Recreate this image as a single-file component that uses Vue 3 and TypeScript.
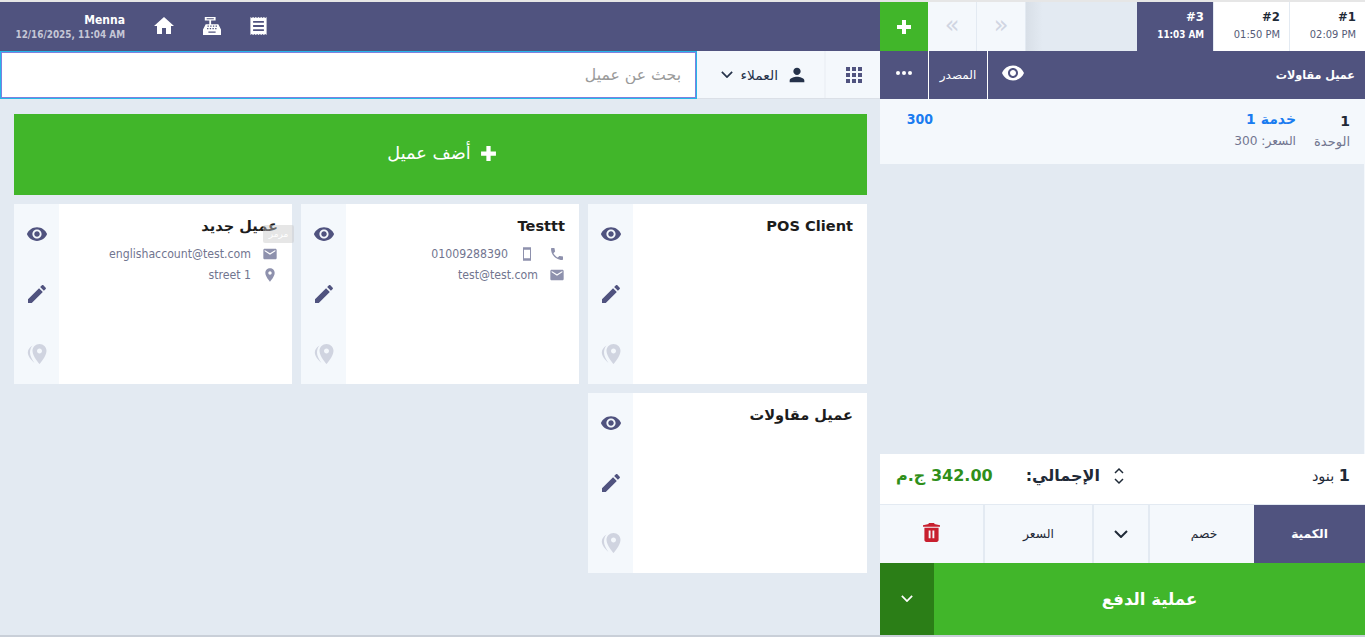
<template>
  <div class="pos" dir="rtl">
    <aside class="order">
      <div class="tabs">
        <div v-for="t in tabs" :key="t.id" class="tab" :class="{ active: t.active }">
          <b dir="ltr">#{{ t.id }}</b>
          <span dir="ltr">{{ t.time }}</span>
        </div>
        <div class="tab-gap"></div>
        <button class="nav-btn" dir="ltr">»</button>
        <button class="nav-btn" dir="ltr">«</button>
        <button class="add-tab">
          <svg viewBox="0 0 16 16" width="16" height="16"><path d="M6 1h4v5h5v4h-5v5H6v-5H1V6h5z" /></svg>
        </button>
      </div>

      <div class="customer-bar">
        <span class="customer-name">عميل مقاولات</span>
        <svg class="bar-eye" viewBox="0 0 24 24" width="24" height="24"><path :d="icons.eye" /></svg>
        <span class="bar-cell source">المصدر</span>
        <span class="bar-cell dots"><i></i><i></i><i></i></span>
      </div>

      <div class="line">
        <div class="line-qty">
          <b>1</b>
          <span>الوحدة</span>
        </div>
        <div class="line-info">
          <b>خدمة 1</b>
          <span>السعر: 300</span>
        </div>
        <b class="line-total">300</b>
      </div>

      <div class="order-fill"></div>

      <div class="summary">
        <div class="count"><b>1</b> بنود</div>
        <div class="totals">
          <svg viewBox="0 0 12 20" width="12" height="20" class="updown">
            <path d="M2 7l4-4 4 4M2 13l4 4 4-4" />
          </svg>
          <span class="total-label">الإجمالي:</span>
          <b class="total-value">342.00 ج.م</b>
        </div>
      </div>

      <div class="actions">
        <button class="act qty">الكمية</button>
        <button class="act discount">خصم</button>
        <button class="act chev">
          <svg viewBox="0 0 14 8" width="14" height="8"><path d="M1 1l6 6 6-6" /></svg>
        </button>
        <button class="act price">السعر</button>
        <button class="act trash">
          <svg viewBox="0 0 18 20" width="17" height="19">
            <path fill-rule="evenodd" d="M0 2.200L6 1V0h6v1l6 1.200V4H0zM1.500 5h15v13c0 1.100-.9 2-2 2h-11c-1.100 0-2-.9-2-2zM6 8v8h2V8zm4 0v8h2V8z" />
          </svg>
        </button>
      </div>

      <div class="pay">
        <button class="pay-main">عملية الدفع</button>
        <button class="pay-more">
          <svg viewBox="0 0 14 8" width="12" height="7"><path d="M1 1l6 6 6-6" /></svg>
        </button>
      </div>
    </aside>

    <main class="main">
      <header class="topbar" dir="ltr">
        <div class="user">
          <b>Menna</b>
          <span>12/16/2025, 11:04 AM</span>
        </div>
        <svg class="top-icon home" viewBox="0 0 24 24" width="24" height="24"><path :d="icons.home" /></svg>
        <svg class="top-icon register" viewBox="0 0 20 20" width="18" height="18">
          <path
            fill-rule="evenodd"
            d="M2 0h12v4H9v4H7V4H2zM4 1.500v1h8v-1zM3 8h14l3 6v6H0v-6zM5 9.500v1.300h1.500V9.500zm3 0v1.300h1.500V9.500zm3 0v1.300h1.500V9.500zm3 0v1.300h1.500V9.500zM4.500 12.300v1.300H6v-1.300zm3 0v1.300H9v-1.300zm3 0v1.300H12v-1.300zm3 0v1.300H15v-1.300zM6 16v1.500h8V16z"
          />
        </svg>
        <svg class="top-icon receipt" viewBox="0 0 18 20" width="17" height="18">
          <path
            fill-rule="evenodd"
            d="M0 0l1.500 1L3 0l1.500 1L6 0l1.500 1L9 0l1.500 1L12 0l1.500 1L15 0l1.500 1L18 0v20l-1.500-1-1.500 1-1.500-1-1.500 1-1.500-1L9 20l-1.500-1L6 20l-1.500-1L3 20l-1.500-1L0 20zM3 4.500v2h12v-2zM3 9v2h12V9zM3 13.500v2h12v-2z"
          />
        </svg>
      </header>

      <div class="search-row">
        <button class="grid-btn">
          <svg viewBox="0 0 24 24" width="24" height="24"><path :d="icons.apps" /></svg>
        </button>
        <button class="clients-btn">
          <svg viewBox="0 0 24 24" width="22" height="22"><path :d="icons.person" /></svg>
          <span>العملاء</span>
          <svg viewBox="0 0 14 8" width="12" height="7"><path d="M1 1l6 6 6-6" /></svg>
        </button>
        <input class="search" type="text" placeholder="بحث عن عميل" />
      </div>

      <div class="content">
        <button class="add-client">
          <svg viewBox="0 0 16 16" width="17" height="17"><path d="M6 1h4v5h5v4h-5v5H6v-5H1V6h5z" /></svg>
          أضف عميل
        </button>

        <div class="cards">
          <article v-for="c in clients" :key="c.name" class="card">
            <div class="card-body">
              <h3>{{ c.name }}</h3>
              <div v-for="(row, i) in c.rows" :key="i" class="info">
                <svg viewBox="0 0 24 24" width="16" height="16"><path :d="icons[row.icon]" /></svg>
                <svg v-if="row.icon2" class="mobile" viewBox="0 0 24 24" width="16" height="16">
                  <path fill-rule="evenodd" :d="icons[row.icon2]" />
                </svg>
                <span dir="ltr">{{ row.text }}</span>
              </div>
              <span v-if="c.tip" class="tip">مرمر</span>
            </div>
            <div class="card-side">
              <svg viewBox="0 0 24 24" width="22" height="22"><path :d="icons.eye" /></svg>
              <svg viewBox="0 0 24 24" width="24" height="24"><path :d="icons.edit" /></svg>
              <svg class="pin" viewBox="0 0 24 24" width="24" height="24">
                <path transform="translate(2.500 0)" :d="icons.place" />
                <path d="M7.500 3.500C4.500 5 2.800 8 2.800 10.500c0 3.500 3.200 7.500 6.700 10.500C6.800 17.500 5 13.500 5 10.500 5 8 5.800 5.500 7.500 3.500z" />
              </svg>
            </div>
          </article>
        </div>
      </div>
    </main>
  </div>
</template>

<script setup lang="ts">
const icons: Record<string, string> = {
  eye: 'M12 4.500C7 4.500 2.730 7.610 1 12c1.730 4.390 6 7.500 11 7.500s9.270-3.110 11-7.500c-1.730-4.390-6-7.500-11-7.500zM12 17c-2.760 0-5-2.240-5-5s2.240-5 5-5 5 2.240 5 5-2.240 5-5 5zm0-8c-1.660 0-3 1.340-3 3s1.340 3 3 3 3-1.340 3-3-1.340-3-3-3z',
  edit: 'M3 17.250V21h3.750L17.810 9.940l-3.750-3.750L3 17.250zM20.710 7.040c.39-.39.39-1.020 0-1.410l-2.340-2.340c-.39-.39-1.020-.39-1.410 0l-1.830 1.830 3.750 3.750 1.830-1.830z',
  home: 'M10 20v-6h4v6h5v-8h3L12 3 2 12h3v8z',
  person: 'M12 12c2.210 0 4-1.790 4-4s-1.790-4-4-4-4 1.790-4 4 1.790 4 4 4zm0 2c-2.670 0-8 1.340-8 4v2h16v-2c0-2.660-5.330-4-8-4z',
  apps: 'M4 8h4V4H4v4zm6 12h4v-4h-4v4zm-6 0h4v-4H4v4zm0-6h4v-4H4v4zm6 0h4v-4h-4v4zm6-10v4h4V4h-4zm-6 4h4V4h-4v4zm6 6h4v-4h-4v4zm0 6h4v-4h-4v4z',
  email: 'M20 4H4c-1.100 0-2 .9-2 2v12c0 1.100.9 2 2 2h16c1.100 0 2-.9 2-2V6c0-1.100-.9-2-2-2zm0 4l-8 5-8-5V6l8 5 8-5v2z',
  place: 'M12 2C8.130 2 5 5.130 5 9c0 5.250 7 13 7 13s7-7.750 7-13c0-3.870-3.130-7-7-7zm0 9.500c-1.380 0-2.500-1.120-2.500-2.500s1.120-2.500 2.500-2.500 2.500 1.120 2.500 2.500-1.120 2.500-2.500 2.500z',
  phone: 'M6.620 10.790c1.440 2.830 3.760 5.140 6.590 6.590l2.200-2.200c.27-.27.67-.36 1.020-.24 1.120.37 2.330.57 3.570.57.55 0 1 .45 1 1V20c0 .55-.45 1-1 1-9.390 0-17-7.610-17-17 0-.55.45-1 1-1h3.500c.55 0 1 .45 1 1 0 1.250.2 2.450.57 3.570.11.35.03.74-.25 1.020l-2.200 2.200z',
  mobile: 'M6 2h12v20H6zM7.500 5.500v13h9v-13z',
}

const tabs = [
  { id: 1, time: '02:09 PM', active: false },
  { id: 2, time: '01:50 PM', active: false },
  { id: 3, time: '11:03 AM', active: true },
]

const clients = [
  { name: 'POS Client', rows: [], tip: false },
  {
    name: 'Testtt',
    tip: false,
    rows: [
      { icon: 'phone', icon2: 'mobile', text: '01009288390' },
      { icon: 'email', text: 'test@test.com' },
    ],
  },
  {
    name: 'عميل جديد',
    tip: true,
    rows: [
      { icon: 'email', text: 'englishaccount@test.com' },
      { icon: 'place', text: 'street 1' },
    ],
  },
  { name: 'عميل مقاولات', rows: [], tip: false },
]
</script>

<style>
html,
body {
  margin: 0;
  background: #e3eaf2;
}
</style>

<style scoped>
.pos {
  display: flex;
  height: 633px;
  padding-top: 2px;
  border-bottom: 2px solid #c9cfd8;
  background: #e3eaf2;
  font-family: "DejaVu Sans", sans-serif;
  color: #1f2a37;
  overflow: hidden;
  box-shadow: inset 0 2px 0 #e6e6e6;
}
button {
  border: 0;
  padding: 0;
  font: inherit;
  cursor: pointer;
}
svg {
  fill: currentColor;
  flex: none;
}

/* order panel */
.order {
  width: 485px;
  flex: none;
  display: flex;
  flex-direction: column;
}
.tabs {
  display: flex;
  height: 49px;
}
.tab {
  width: 75px;
  margin-left: 1px;
  background: #fff;
  padding: 5px 9px 0 0;
  box-sizing: border-box;
  display: flex;
  flex-direction: column;
  align-items: flex-start;
  font-family: "DejaVu Sans Condensed", "DejaVu Sans", sans-serif;
  font-stretch: condensed;
}
.tab b {
  font-size: 13px;
  line-height: 20px;
}
.tab span {
  font-size: 11px;
  line-height: 15px;
  color: #565b78;
}
.tab.active {
  width: 76px;
  margin-left: 0;
  background: #50537f;
  color: #fff;
}
.tab.active span {
  color: #fff;
  font-weight: 700;
  font-size: 9.800px;
}
.tab-gap {
  flex: 1;
  background: linear-gradient(to left, #e3eaf2 85%, #d8dfe7);
}
.nav-btn {
  width: 48px;
  margin-right: 1px;
  background: #f4f8fc;
  color: #d0d5e2;
  font-size: 24px;
  line-height: 1;
  padding-bottom: 4px;
}
.add-tab {
  width: 48px;
  background: #41b62a;
  color: #fff;
  display: flex;
  align-items: center;
  justify-content: center;
}
.customer-bar {
  height: 48px;
  display: flex;
  align-items: center;
  background: #50537f;
  color: #fff;
}
.customer-name {
  flex: 1;
  padding-right: 10px;
  font-size: 11.200px;
  font-weight: 700;
}
.bar-eye {
  margin-left: 13px;
  margin-bottom: 4px;
}
.bar-cell {
  height: 100%;
  display: flex;
  align-items: center;
  justify-content: center;
  border-right: 1px solid #fff;
  box-sizing: border-box;
  font-size: 12px;
}
.source {
  width: 59px;
}
.dots {
  width: 49px;
  gap: 2px;
  padding-bottom: 4px;
}
.dots i {
  width: 4px;
  height: 4px;
  border-radius: 50%;
  background: #fff;
}
.line {
  height: 65px;
  display: flex;
  background: #f4f8fc;
  padding: 10px 15px 0 0;
  box-sizing: border-box;
}
.line-qty {
  width: 54px;
  display: flex;
  flex-direction: column;
}
.line-qty b,
.line-info b,
.line-total {
  font-size: 14px;
  line-height: 20px;
}
.line-qty b {
  margin-top: 2px;
}
.line-qty span,
.line-info span {
  font-size: 13px;
  color: #71758f;
  line-height: 22px;
}
.line-info {
  flex: 1;
  display: flex;
  flex-direction: column;
}
.line-info span {
  margin-top: 1px;
  font-size: 12.200px;
}
.line-info b,
.line-total {
  color: #1a7cf0;
}
.line-total {
  margin-left: 27px;
  width: 26px;
  font-family: "DejaVu Sans Condensed", "DejaVu Sans", sans-serif;
  font-stretch: condensed;
}
.order-fill {
  flex: 1;
  border-right: 1px solid #f4f8fc;
}
.summary {
  height: 50px;
  flex: none;
  display: flex;
  align-items: center;
  justify-content: space-between;
  background: #fff;
  padding: 0 15px 7px 16px;
  box-sizing: border-box;
}
.count {
  font-size: 14.500px;
}
.count b {
  font-size: 16px;
}
.totals {
  display: flex;
  align-items: center;
}
.updown {
  fill: none;
  stroke: #1f2a37;
  stroke-width: 1.500;
  margin-left: 13px;
}
.total-label {
  font-size: 16px;
  font-weight: 700;
  margin-left: 33px;
}
.total-value {
  font-size: 16px;
  color: #2f8f1a;
}
.actions {
  height: 59px;
  flex: none;
  display: flex;
  border-top: 1px solid #e3eaf2;
  box-sizing: border-box;
  background: #e3eaf2;
}
.act {
  background: #f4f8fc;
  font-size: 12.300px;
  color: #1f2a37;
  display: flex;
  align-items: center;
  justify-content: center;
  margin-left: 2px;
  height: 100%;
}
.act svg path {
  fill: none;
  stroke: currentColor;
  stroke-width: 2;
}
.act.qty {
  width: 111px;
  margin-left: 0;
  background: #50537f;
  color: #fff;
  font-weight: 700;
}
.act.discount {
  width: 104px;
  padding-left: 4px;
  box-sizing: border-box;
}
.act.chev {
  width: 54px;
}
.act.price {
  width: 107px;
}
.act.trash {
  flex: 1;
  margin-left: 0;
  color: #c8202f;
  padding-bottom: 4px;
  box-sizing: border-box;
}
.act.trash svg path {
  fill: currentColor;
  stroke: none;
}
.pay {
  height: 72px;
  flex: none;
  display: flex;
}
.pay-main {
  flex: 1;
  background: #41b62a;
  color: #fff;
  font-size: 16.600px;
  font-weight: 700;
}
.pay-more {
  width: 54px;
  background: #2b7e17;
  color: #fff;
  padding-bottom: 6px;
}
.pay-more path {
  fill: none;
  stroke: currentColor;
  stroke-width: 2;
}

/* main */
.main {
  flex: 1;
  min-width: 0;
  display: flex;
  flex-direction: column;
}
.topbar {
  height: 49px;
  display: flex;
  align-items: center;
  background: #50537f;
  color: #fff;
  padding-left: 16px;
  box-sizing: border-box;
}
.user {
  display: flex;
  flex-direction: column;
  align-items: flex-end;
  width: 109px;
  white-space: nowrap;
  font-size: 9.900px;
  font-family: "DejaVu Sans Condensed", "DejaVu Sans", sans-serif;
  font-stretch: condensed;
}
.user b {
  font-size: 12px;
  line-height: 16px;
}
.user span {
  color: #c5c7d6;
  font-weight: 700;
  line-height: 14px;
}
.top-icon {
  margin-bottom: 2px;
}
.home {
  margin-left: 27px;
}
.register {
  margin-left: 27px;
}
.receipt {
  margin-left: 29px;
}
.search-row {
  height: 48px;
  display: flex;
  background: #f4f8fc;
  border-bottom: 1px solid #dbe0e7;
  box-sizing: border-box;
}
.grid-btn {
  width: 56px;
  padding-left: 2px;
  background: transparent;
  color: #50537f;
  border-left: 2px solid #eef2f7;
  box-sizing: border-box;
  display: flex;
  align-items: center;
  justify-content: center;
}
.clients-btn {
  width: 127px;
  background: transparent;
  display: flex;
  align-items: center;
  padding-right: 16px;
  box-sizing: border-box;
  color: #25324a;
  font-size: 13.800px;
  gap: 8px;
}
.clients-btn svg:last-child path {
  fill: none;
  stroke: currentColor;
  stroke-width: 2;
}
.search {
  flex: 1;
  min-width: 0;
  height: 48px;
  box-sizing: border-box;
  border: 2px solid #8080dd;
  outline: 1px solid #25b7e8;
  outline-offset: -1px;
  padding: 0 14px 1px;
  font: inherit;
  font-size: 15.700px;
  background: #fff;
  color: #1f2a37;
}
.search::placeholder {
  color: #9a9a9a;
}
.content {
  flex: 1;
  padding: 15px 13px 0 14px;
  display: flex;
  flex-direction: column;
  gap: 9px;
}
.add-client {
  height: 81px;
  flex: none;
  background: #41b62a;
  color: #fff;
  font-size: 17.700px;
  display: flex;
  align-items: center;
  justify-content: center;
  gap: 9px;
  padding: 0 0 3px 3px;
  box-sizing: border-box;
}
.cards {
  display: grid;
  grid-template-columns: 279px 278px 278px;
  grid-auto-rows: 180px;
  gap: 9px;
}
.card {
  display: flex;
  background: #fff;
}
.card-body {
  flex: 1;
  padding: 10px 14px 0 0;
  position: relative;
}
.card-body h3 {
  margin: 0 0 5px;
  font-size: 14.600px;
  line-height: 24px;
  font-weight: 700;
  color: #1c1c1c;
}
.info {
  display: flex;
  align-items: center;
  height: 21px;
  font-family: "DejaVu Sans Condensed", "DejaVu Sans", sans-serif;
  font-stretch: condensed;
  font-size: 12.200px;
  color: #71758f;
  gap: 11px;
}
.info svg {
  fill: #8e91ad;
}
.info .mobile {
  margin-right: 3px;
}
.card-side {
  width: 45px;
  flex: none;
  background: #f4f8fc;
  color: #50537f;
  display: flex;
  flex-direction: column;
  align-items: center;
  padding-top: 19px;
  box-sizing: border-box;
  gap: 37px;
}
.card-side .pin {
  fill: #d0d4e0;
  margin-top: -1px;
}
.tip {
  position: absolute;
  top: 21px;
  right: -2px;
  width: 31px;
  height: 18px;
  border-radius: 2px;
  background: rgba(200, 200, 200, 0.45);
  color: #fff;
  font-size: 9px;
  line-height: 18px;
  text-align: center;
}
</style>
